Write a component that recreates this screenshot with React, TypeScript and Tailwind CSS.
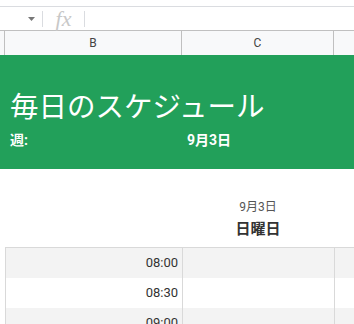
const font = { fontFamily: '"Roboto", "Noto Sans CJK JP", sans-serif' };

const times = ["08:00", "08:30", "09:00"];

export default function App() {
  return (
    <div className="w-[354px] h-[324px] overflow-hidden bg-white text-[#333]" style={font}>
      {/* toolbar edge */}
      <div className="h-[7px] border-b border-[#dadce0]" />
      {/* formula bar */}
      <div className="flex h-[24px] items-center border-b border-[#c0c0c0]">
        <div className="flex w-[42px] items-center justify-end pr-[7px]">
          <svg width="7" height="4" viewBox="0 0 7 4">
            <path d="M0 0h7L3.5 4z" fill="#777" />
          </svg>
        </div>
        <div className="h-[16px] w-px bg-[#dadce0]" />
        <div className="flex w-[41px] justify-center text-[22px] leading-[24px] italic text-[#c8c8c8]" style={{ fontFamily: '"Liberation Serif", serif' }}>
          fx
        </div>
        <div className="h-[16px] w-px bg-[#dadce0]" />
      </div>
      {/* column headers */}
      <div className="flex h-[24px] bg-[#f8f9fa] text-[12px] text-[#444]">
        <div className="w-[5px] border-r border-[#c0c0c0]" />
        <div className="flex w-[177px] items-center justify-center border-r border-[#c0c0c0]">B</div>
        <div className="flex w-[152px] items-center justify-center border-r border-[#c0c0c0]">C</div>
        <div className="flex-1" />
      </div>
      {/* green banner */}
      <div className="h-[114px] bg-[#22a05a] pl-[10px] pt-[36px] text-white">
        <div className="text-[28.5px] leading-[34px]">毎日のスケジュール</div>
        <div className="mt-[6px] flex text-[14px] font-bold leading-[18px]">
          <span className="w-[177px]">週:</span>
          <span>9月3日</span>
        </div>
      </div>
      {/* day heading */}
      <div className="flex h-[78px]">
        <div className="w-[182px]" />
        <div className="flex w-[152px] flex-col items-center pt-[31px]">
          <div className="text-[12px] leading-[15px] text-[#555]">9月3日</div>
          <div className="mt-[5px] text-[15px] font-bold leading-[18px] text-[#333]">日曜日</div>
        </div>
      </div>
      {/* rows */}
      <div className="ml-[5px] border-t border-l border-[#d9d9d9]">
        {times.map((t, i) => (
          <div key={t} className={`flex h-[30px] ${i % 2 === 0 ? "bg-[#f3f3f3]" : "bg-white"}`}>
            <div className="flex w-[176px] items-center justify-end pr-[4px] text-[13px] text-[#333]">{t}</div>
            <div className="w-[152px] border-l border-[#d9d9d9]" />
            <div className="flex-1 border-l border-[#d9d9d9]" />
          </div>
        ))}
      </div>
    </div>
  );
}
